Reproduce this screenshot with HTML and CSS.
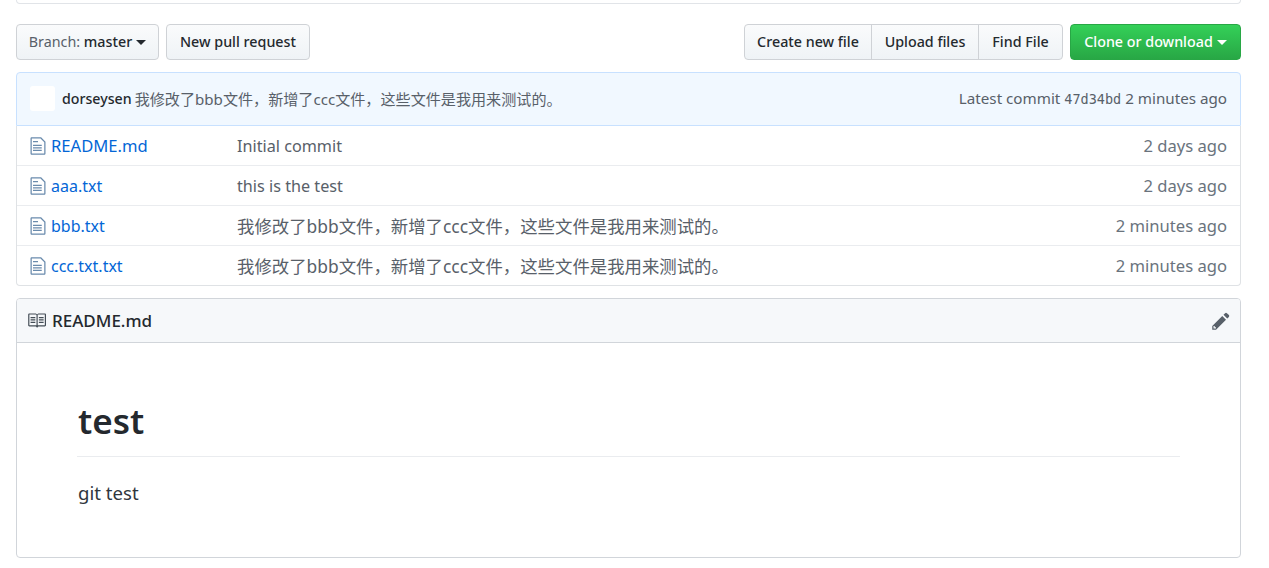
FILE: index.html
```html
<!DOCTYPE html>
<html lang="zh-CN">
<head>
<meta charset="utf-8">
<title>README</title>
<link rel="stylesheet" href="styles.css">
</head>
<body>
<div class="page">
  <div class="top-edge"></div>
  <div class="toolbar">
    <div class="group">
      <button class="btn btn-branch"><span class="muted">Branch:</span> master<span class="caret"></span></button>
      <button class="btn btn-pr">New pull request</button>
    </div>
    <div class="group">
      <div class="joined">
        <button class="btn btn-create">Create new file</button>
        <button class="btn btn-upload">Upload files</button>
        <button class="btn btn-find">Find File</button>
      </div>
      <button class="btn btn-green">Clone or download<span class="caret"></span></button>
    </div>
  </div>
  <div class="commit">
    <div class="commit-left">
      <span class="avatar"></span>
      <span class="author">dorseysen</span>
      <span class="commit-msg">我修改了bbb文件，新增了ccc文件，这些文件是我用来测试的。</span>
    </div>
    <div class="commit-right">Latest commit <span class="sha">47d34bd</span> 2 minutes ago</div>
  </div>
  <div class="files">
    <div class="row">
      <svg class="file-icon" viewBox="0 0 12 16"><path d="M6 5H2V4h4v1zM2 8h7V7H2v1zm0 2h7V9H2v1zm0 2h7v-1H2v1zm10-7.500V14c0 .55-.45 1-1 1H1c-.55 0-1-.45-1-1V2c0-.55.45-1 1-1h7.500L12 4.500zM11 5L8 2H1v12h10V5z"/></svg>
      <a class="name name-wide">README.md</a>
      <span class="msg">Initial commit</span>
      <span class="age">2 days ago</span>
    </div>
    <div class="row">
      <svg class="file-icon" viewBox="0 0 12 16"><path d="M6 5H2V4h4v1zM2 8h7V7H2v1zm0 2h7V9H2v1zm0 2h7v-1H2v1zm10-7.500V14c0 .55-.45 1-1 1H1c-.55 0-1-.45-1-1V2c0-.55.45-1 1-1h7.500L12 4.500zM11 5L8 2H1v12h10V5z"/></svg>
      <a class="name">aaa.txt</a>
      <span class="msg">this is the test</span>
      <span class="age">2 days ago</span>
    </div>
    <div class="row">
      <svg class="file-icon" viewBox="0 0 12 16"><path d="M6 5H2V4h4v1zM2 8h7V7H2v1zm0 2h7V9H2v1zm0 2h7v-1H2v1zm10-7.500V14c0 .55-.45 1-1 1H1c-.55 0-1-.45-1-1V2c0-.55.45-1 1-1h7.500L12 4.500zM11 5L8 2H1v12h10V5z"/></svg>
      <a class="name">bbb.txt</a>
      <span class="msg msg-cjk">我修改了bbb文件，新增了ccc文件，这些文件是我用来测试的。</span>
      <span class="age">2 minutes ago</span>
    </div>
    <div class="row">
      <svg class="file-icon" viewBox="0 0 12 16"><path d="M6 5H2V4h4v1zM2 8h7V7H2v1zm0 2h7V9H2v1zm0 2h7v-1H2v1zm10-7.500V14c0 .55-.45 1-1 1H1c-.55 0-1-.45-1-1V2c0-.55.45-1 1-1h7.500L12 4.500zM11 5L8 2H1v12h10V5z"/></svg>
      <a class="name">ccc.txt.txt</a>
      <span class="msg msg-cjk">我修改了bbb文件，新增了ccc文件，这些文件是我用来测试的。</span>
      <span class="age">2 minutes ago</span>
    </div>
  </div>
  <div class="readme">
    <div class="readme-head">
      <div class="readme-title">
        <svg class="book-icon" viewBox="0 0 16 16"><path d="M3 5h4v1H3V5zm0 3h4V7H3v1zm0 2h4V9H3v1zm11-5h-4v1h4V5zm0 2h-4v1h4V7zm0 2h-4v1h4V9zm2-6v9c0 .55-.45 1-1 1H9.500l-1 1-1-1H2c-.55 0-1-.45-1-1V3c0-.55.45-1 1-1h5.500l1 1 1-1H15c.55 0 1 .45 1 1zm-8 .5L7.500 3H2v9h6V3.500zm7-.5H9.500l-.5.5V12h6V3z"/></svg>
        <span>README.md</span>
      </div>
      <svg class="pencil-icon" viewBox="0 0 14 16"><path d="M0 12v3h3l8-8-3-3-8 8zm3 2H1v-2h1v1h1v1zm10.300-9.300L12 6 9 3l1.300-1.300a.996.996 0 0 1 1.410 0l1.590 1.590c.39.39.39 1.020 0 1.410z"/></svg>
    </div>
    <div class="readme-body">
      <h1>test</h1>
      <p>git test</p>
    </div>
  </div>
</div>
</body>
</html>
```
FILE: styles.css
```css
* { box-sizing: border-box; }
html, body { margin: 0; padding: 0; background: #fff; }
body {
  font-family: "Noto Sans", "Noto Sans CJK SC", sans-serif;
  font-size: 16px;
  color: #24292e;
  overflow: hidden;
}
.page { width: 1225px; margin-left: 16px; }
.top-edge {
  height: 4px;
  border: 1px solid #e1e4e8;
  border-top: 0;
  border-radius: 0 0 4px 4px;
  margin-bottom: 20px;
}
.toolbar {
  display: flex;
  justify-content: space-between;
  margin-bottom: 12px;
}
.group { display: flex; gap: 7px; }
.joined { display: flex; }
.joined .btn { border-radius: 0; margin-left: -1px; }
.joined .btn:first-child { border-radius: 4px 0 0 4px; margin-left: 0; }
.joined .btn:last-child { border-radius: 0 4px 4px 0; }
.btn {
  height: 36px;
  padding: 0 0 2px;
  font: 500 14.3px "Noto Sans", sans-serif;
  color: #24292e;
  background: linear-gradient(#fafbfc, #eff3f6);
  border: 1px solid #cfd2d6;
  border-radius: 4px;
  white-space: nowrap;
}
.btn-branch { width: 143px; }
.btn-pr { width: 144px; }
.btn-create { width: 128px; }
.btn-upload { width: 108px; }
.btn-find { width: 85px; }
.muted { color: #586069; font-weight: 400; }
.caret {
  display: inline-block;
  margin-left: 4px;
  vertical-align: 2px;
  border: 5px solid transparent;
  border-top-color: currentColor;
  border-bottom: 0;
}
.btn-green {
  width: 171px;
  color: #fff;
  background: linear-gradient(#34d058, #28a745);
  border-color: #28a745;
}
.commit {
  display: flex;
  justify-content: space-between;
  align-items: center;
  height: 54px;
  padding: 0 13px 2px;
  background: #f1f8ff;
  border: 1px solid #c8e1ff;
  border-radius: 4px 4px 0 0;
  color: #586069;
}
.commit-left { display: flex; align-items: center; }
.avatar {
  width: 25px;
  height: 25px;
  background: #fff;
  border-radius: 3px;
  margin-right: 7px;
}
.author { color: #24292e; font-size: 14.2px; font-weight: 500; margin-right: 3px; }
.commit-msg { font-size: 15.1px; }
.commit-right { font-size: 15.2px; }
.sha { font-family: "DejaVu Sans Mono", monospace; font-size: 13.5px; }
.files {
  border: 1px solid #dfe2e5;
  border-top: 0;
  border-radius: 0 0 4px 4px;
  margin-bottom: 12px;
}
.row {
  display: flex;
  align-items: center;
  height: 40px;
  padding: 0 13px;
  border-top: 1px solid #eaecef;
  color: #586069;
}
.row:first-child { border-top: 0; height: 39px; }
.file-icon { width: 16px; height: 20px; fill: #6a8bad; margin-right: 5px; flex: none; }
.name { width: 186px; color: #0366d6; flex: none; }
.name-wide { font-size: 16.6px; }
.msg { flex: 1; font-size: 16.2px; }
.msg-cjk { font-size: 17.4px; }
.age { color: #6a737d; font-size: 16.6px; }
.readme { border: 1px solid #d1d5da; border-radius: 4px; height: 260px; }
.readme-head {
  display: flex;
  justify-content: space-between;
  align-items: center;
  height: 44px;
  padding: 0 10px;
  background: #f6f8fa;
  border-bottom: 1px solid #d1d5da;
  border-radius: 3px 3px 0 0;
}
.readme-title { display: flex; align-items: center; gap: 6px; font-size: 17px; font-weight: 500; }
.book-icon { width: 19px; height: 19px; fill: #444d56; }
.pencil-icon { width: 18px; height: 20px; fill: #586069; }
.readme-body { padding: 56px 60px 0; }
h1 {
  margin: 0 0 23px;
  padding-bottom: 13px;
  font-size: 35px;
  line-height: 44px;
  font-weight: 600;
  text-indent: 1px;
  border-bottom: 1px solid #eaecef;
}
p { margin: 0; font-size: 18.6px; color: #2f363d; text-indent: 1px; }
```
